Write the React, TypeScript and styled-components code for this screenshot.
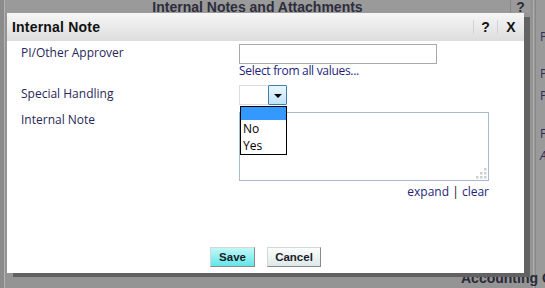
import React from "react";
import styled, { createGlobalStyle } from "styled-components";

const Global = createGlobalStyle`
  html, body { margin: 0; padding: 0; }
  body { width: 545px; height: 288px; overflow: hidden; background: #949494; }
`;

const Page = styled.div`
  position: relative;
  width: 545px;
  height: 288px;
  overflow: hidden;
  display: flex;
  background: #949494;
  font-family: "Open Sans", "Noto Sans", sans-serif;
`;

const LeftEdge = styled.div`
  width: 4px;
  flex: none;
  background: #8b8b8b;
  border-right: 1px solid #b3b3b3;
`;

const Main = styled.div`
  width: 525px;
  flex: none;
  display: flex;
  flex-direction: column;
`;

const HeaderRow = styled.div`
  height: 13px;
  display: flex;
  background: #9a9a9a;
  overflow: hidden;
`;

const HeaderTitle = styled.div`
  width: 505px;
  border-right: 1px solid #858585;
  text-align: center;
  font: bold 14px/14px "Liberation Sans", Arial, sans-serif;
  color: #2d2d3d;
`;

const HeaderHelp = styled.div`
  flex: 1;
  text-align: center;
  font: bold 14px/14px "Liberation Sans", Arial, sans-serif;
  color: #2d2d3d;
`;

const Spacer = styled.div`
  flex: 1;
`;

const Footer = styled.div`
  position: relative;
  z-index: 1;
  height: 18px;
  padding-left: 456px;
  white-space: nowrap;
  font: bold 14px/16px "Liberation Sans", Arial, sans-serif;
  color: #2a2a38;
`;

const RightCol = styled.div`
  width: 15px;
  flex: none;
  padding-top: 29px;
  box-sizing: border-box;
  overflow: hidden;
  background: linear-gradient(
    to right,
    #949494 0 3px,
    #adadad 3px 4px,
    #989898 4px 5px,
    #878787 5px 6px,
    #9a9a9a 6px
  );
`;

const SideItem = styled.div<{ $gap: number; $italic?: boolean }>`
  margin-top: ${(p) => p.$gap}px;
  padding-left: 10px;
  font-size: 12px;
  line-height: 16px;
  white-space: nowrap;
  color: #2e2e58;
  font-style: ${(p) => (p.$italic ? "italic" : "normal")};
`;

const Dialog = styled.div`
  position: absolute;
  left: 7px;
  top: 13px;
  width: 517px;
  height: 260px;
  background: #fff;
  box-shadow: 6px 4px 0 #626262;
  display: flex;
  flex-direction: column;
  z-index: 2;
`;

const TitleBar = styled.div`
  height: 28px;
  flex: none;
  display: flex;
  align-items: center;
  padding-left: 5px;
  background: linear-gradient(#f6f6f6, #dddddd);
`;

const Title = styled.div`
  flex: 1;
  font: bold 14px/16px "Liberation Sans", Arial, sans-serif;
  letter-spacing: 0.2px;
  color: #111;
`;

const TitleButton = styled.div<{ $w: number }>`
  width: ${(p) => p.$w}px;
  height: 14px;
  border-left: 1px solid #d2d2d2;
  display: flex;
  align-items: center;
  justify-content: center;
  font: bold 14px/14px "Liberation Sans", Arial, sans-serif;
  color: #111;
`;

const Body = styled.div`
  flex: 1;
  display: flex;
  flex-direction: column;
  padding: 3px 0 0 14px;
`;

const Row = styled.div<{ $top: number }>`
  display: flex;
  margin-top: ${(p) => p.$top}px;
`;

const Label = styled.div<{ $pad?: number }>`
  width: 218px;
  flex: none;
  padding-top: ${(p) => (p.$pad ?? 1)}px;
  font-size: 12px;
  line-height: 16px;
  color: #27275a;
`;

const Field = styled.div`
  display: flex;
  flex-direction: column;
`;

const TextInput = styled.div`
  width: 198px;
  height: 20px;
  box-sizing: border-box;
  border: 1px solid #a9a9a9;
  background: #fff;
`;

const Link = styled.span`
  font-size: 12px;
  line-height: 14px;
  letter-spacing: -0.3px;
  color: #1e1e7a;
`;

const SelectBox = styled.div`
  position: relative;
  width: 48px;
  height: 20px;
  display: flex;
`;

const SelectValue = styled.div`
  flex: 1;
  border: 1px solid #dcdcdc;
  border-right: none;
  background: #fff;
`;

const SelectArrow = styled.div`
  width: 19px;
  box-sizing: border-box;
  border: 1px solid #3c7fb1;
  border-radius: 1px;
  background: linear-gradient(#eaf6fd, #bfe3f8);
  display: flex;
  align-items: center;
  justify-content: center;
`;

const Triangle = styled.div`
  width: 0;
  height: 0;
  border-left: 4px solid transparent;
  border-right: 4px solid transparent;
  border-top: 4px solid #000;
  margin-top: 1px;
`;

const ListBox = styled.div`
  position: absolute;
  left: 1px;
  top: 21px;
  width: 47px;
  box-sizing: border-box;
  border: 1px solid #000;
  background: #fff;
  z-index: 3;
`;

const Option = styled.div<{ $active?: boolean }>`
  height: ${(p) => (p.$active ? 13 : 17)}px;
  padding-left: 2px;
  font-size: 12px;
  line-height: 17px;
  color: #000;
  background: ${(p) => (p.$active ? "#3399ff" : "#fff")};
`;

const NoteArea = styled.div`
  position: relative;
  width: 250px;
  height: 69px;
  box-sizing: border-box;
  border: 1px solid #a8bbd3;
  background: #fff;
`;

const Grip = styled.svg`
  position: absolute;
  right: 1px;
  bottom: 1px;
`;

const LinkRow = styled.div`
  width: 250px;
  margin-top: 3px;
  text-align: right;
  font-size: 12px;
  line-height: 16px;
  color: #1e1e7a;
`;

const Pipe = styled.span`
  color: #111;
`;

const ButtonBar = styled.div`
  margin-top: auto;
  margin-left: -14px;
  padding-bottom: 6px;
  display: flex;
  justify-content: center;
  gap: 12px;
`;

const Button = styled.div<{ $primary?: boolean; $w: number }>`
  width: ${(p) => p.$w}px;
  height: 20px;
  box-sizing: border-box;
  border: 1px solid;
  border-color: #d6d6d6 #8a8a8a #8a8a8a #d6d6d6;
  background: ${(p) =>
    p.$primary
      ? "linear-gradient(#c2f8f8, #62e6e9)"
      : "linear-gradient(#fbfdfd, #dde9e9)"};
  display: flex;
  align-items: center;
  justify-content: center;
  font: bold 11.5px/14px "Liberation Sans", Arial, sans-serif;
  color: #1c1c2a;
`;

export default function App() {
  const dots = [
    [8, 0],
    [4, 4],
    [8, 4],
    [0, 8],
    [4, 8],
    [8, 8],
  ];
  return (
    <Page>
      <Global />
      <LeftEdge />
      <Main>
        <HeaderRow>
          <HeaderTitle>Internal Notes and Attachments</HeaderTitle>
          <HeaderHelp>?</HeaderHelp>
        </HeaderRow>
        <Spacer />
        <Footer>Accounting Code</Footer>
      </Main>
      <RightCol>
        <SideItem $gap={0}>PI Name</SideItem>
        <SideItem $gap={21}>Project</SideItem>
        <SideItem $gap={6}>Period</SideItem>
        <SideItem $gap={22}>Fund</SideItem>
        <SideItem $gap={6} $italic>
          Account
        </SideItem>
      </RightCol>

      <Dialog>
        <TitleBar>
          <Title>Internal Note</Title>
          <TitleButton $w={23}>?</TitleButton>
          <TitleButton $w={26}>X</TitleButton>
        </TitleBar>
        <Body>
          <Row $top={0}>
            <Label>PI/Other Approver</Label>
            <Field>
              <TextInput />
              <Link>Select from all values...</Link>
            </Field>
          </Row>
          <Row $top={7}>
            <Label>Special Handling</Label>
            <Field>
              <SelectBox>
                <SelectValue />
                <SelectArrow>
                  <Triangle />
                </SelectArrow>
                <ListBox>
                  <Option $active />
                  <Option>No</Option>
                  <Option>Yes</Option>
                </ListBox>
              </SelectBox>
            </Field>
          </Row>
          <Row $top={7}>
            <Label $pad={0}>Internal Note</Label>
            <Field>
              <NoteArea>
                <Grip width="11" height="11" viewBox="0 0 11 11">
                  {dots.map(([x, y], i) => (
                    <rect key={i} x={x} y={y} width="2.5" height="2.5" fill="#cfcfcf" />
                  ))}
                </Grip>
              </NoteArea>
              <LinkRow>
                expand <Pipe>|</Pipe> clear
              </LinkRow>
            </Field>
          </Row>
          <ButtonBar>
            <Button $primary $w={45}>
              Save
            </Button>
            <Button $w={54}>Cancel</Button>
          </ButtonBar>
        </Body>
      </Dialog>
    </Page>
  );
}
